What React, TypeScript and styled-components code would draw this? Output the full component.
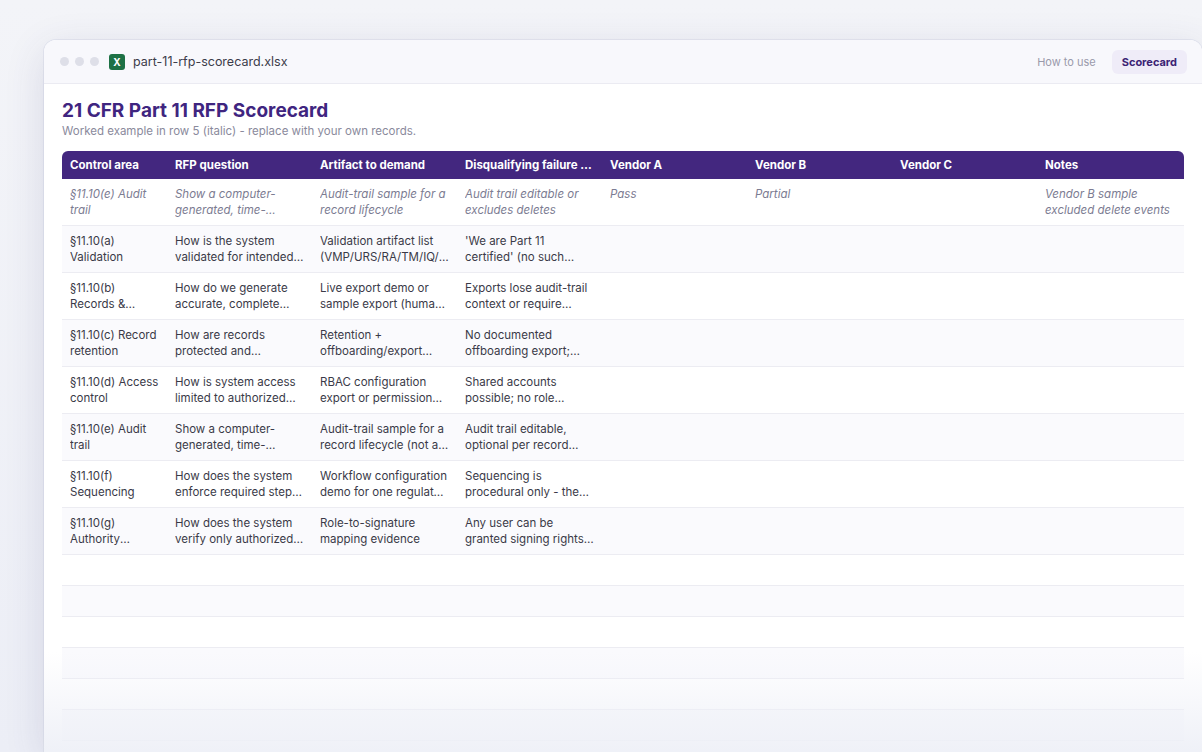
import React from 'react'
import styled, { createGlobalStyle } from 'styled-components'

const Global = createGlobalStyle`
  html, body { margin: 0; padding: 0; }
  body {
    width: 1202px; height: 752px; overflow: hidden;
    background: linear-gradient(180deg, #f3f4f8 0%, #eceef6 100%);
    font-family: Inter, "Noto Sans", sans-serif;
  }
`

const columns = [
  'Control area',
  'RFP question',
  'Artifact to demand',
  'Disqualifying failure mode',
  'Vendor A',
  'Vendor B',
  'Vendor C',
  'Notes',
]

const example = [
  '§11.10(e) Audit trail',
  'Show a computer-generated, time-stamped audit trail',
  'Audit-trail sample for a record lifecycle',
  'Audit trail editable or excludes deletes',
  'Pass',
  'Partial',
  '',
  'Vendor B sample excluded delete events',
]

const rows = [
  ['§11.10(a) Validation', 'How is the system validated for intended use?', 'Validation artifact list (VMP/URS/RA/TM/IQ/ OQ/PQ)', "'We are Part 11 certified' (no such certification)"],
  ['§11.10(b) Records & copies', 'How do we generate accurate, complete copies?', 'Live export demo or sample export (human readable)', 'Exports lose audit-trail context or require vendor'],
  ['§11.10(c) Record retention', 'How are records protected and retained?', 'Retention + offboarding/export policy', 'No documented offboarding export; data loss'],
  ['§11.10(d) Access control', 'How is system access limited to authorized users?', 'RBAC configuration export or permission matrix', 'Shared accounts possible; no role separation'],
  ['§11.10(e) Audit trail', 'Show a computer-generated, time-stamped audit trail', 'Audit-trail sample for a record lifecycle (not a mockup)', 'Audit trail editable, optional per record type'],
  ['§11.10(f) Sequencing', 'How does the system enforce required step order?', 'Workflow configuration demo for one regulated process', 'Sequencing is procedural only - the system allows skipping'],
  ['§11.10(g) Authority checks', 'How does the system verify only authorized signers?', 'Role-to-signature mapping evidence', 'Any user can be granted signing rights without review'],
]

export default function App() {
  return (
    <>
      <Global />
      <Stage>
        <Window>
          <TitleBar>
            <Dots>
              <Dot />
              <Dot />
              <Dot />
            </Dots>
            <XlsIcon>X</XlsIcon>
            <FileName>part-11-rfp-scorecard.xlsx</FileName>
            <Tabs>
              <Tab>How to use</Tab>
              <Tab active>Scorecard</Tab>
            </Tabs>
          </TitleBar>
          <Body>
            <Heading>21 CFR Part 11 RFP Scorecard</Heading>
            <Sub>Worked example in row 5 (italic) - replace with your own records.</Sub>
            <Table>
              <HeadRow>
                {columns.map((c) => (
                  <HeadCell key={c}>{c}</HeadCell>
                ))}
              </HeadRow>
              <Row>
                {example.map((t, i) => (
                  <Cell key={i} italic>
                    <Clamp>{t}</Clamp>
                  </Cell>
                ))}
              </Row>
              {rows.map((r, ri) => (
                <Row key={ri}>
                  {columns.map((_, i) => (
                    <Cell key={i}>
                      <Clamp>{r[i] || ''}</Clamp>
                    </Cell>
                  ))}
                </Row>
              ))}
              {[0, 1, 2, 3, 4, 5].map((i) => (
                <EmptyRow key={i} alt={i % 2 === 0} />
              ))}
            </Table>
          </Body>
          <Fade />
        </Window>
      </Stage>
    </>
  )
}

const Stage = styled.div`
  padding: 40px 0 0 44px;
`

const Window = styled.div`
  position: relative;
  width: 1158px;
  height: 712px;
  background: #fff;
  border-radius: 12px 12px 0 0;
  box-shadow: 0 10px 40px rgba(60, 60, 110, 0.14), 0 0 0 1px rgba(225, 227, 238, 0.8);
  overflow: hidden;
`

const TitleBar = styled.div`
  height: 44px;
  display: flex;
  align-items: center;
  padding: 0 16px;
  background: #f8f8fc;
  border-bottom: 1px solid #ebebf2;
  box-sizing: border-box;
`

const Dots = styled.div`
  display: flex;
  gap: 6px;
  margin-right: 10px;
`

const Dot = styled.span`
  width: 9px;
  height: 9px;
  border-radius: 50%;
  background: #dedfe8;
`

const XlsIcon = styled.span`
  width: 16px;
  height: 16px;
  border-radius: 3px;
  background: #1e7145;
  color: #fff;
  font-size: 10px;
  font-weight: 700;
  display: flex;
  align-items: center;
  justify-content: center;
  margin-right: 8px;
`

const FileName = styled.span`
  font-size: 12.5px;
  color: #3c3c4a;
`

const Tabs = styled.div`
  margin-left: auto;
  display: flex;
  gap: 6px;
  margin-right: -1px;
`

const Tab = styled.span<{ active?: boolean }>`
  font-size: 11px;
  padding: 5px 10px;
  border-radius: 6px;
  color: ${(p) => (p.active ? '#3b2374' : '#9a9aab')};
  font-weight: ${(p) => (p.active ? 700 : 400)};
  background: ${(p) => (p.active ? '#efecf8' : 'transparent')};
`

const Body = styled.div`
  padding: 15px 18px 0 18px;
`

const Heading = styled.h1`
  margin: 0;
  font-size: 19px;
  font-weight: 700;
  color: #3f2580;
  line-height: 24px;
`

const Sub = styled.div`
  font-size: 11.5px;
  color: #8a8a9c;
  margin-top: 1px;
  margin-bottom: 13px;
`

const Table = styled.div`
  width: 1122px;
`

const grid = `
  display: grid;
  grid-template-columns: 105px repeat(7, 145px);
`

const HeadRow = styled.div`
  ${grid};
  height: 28px;
  align-items: center;
  background: #43277f;
  border-radius: 6px 6px 0 0;
`

const HeadCell = styled.div`
  padding: 0 8px;
  font-size: 11.5px;
  font-weight: 700;
  color: #fff;
  white-space: nowrap;
  overflow: hidden;
  text-overflow: ellipsis;
`

const Row = styled.div`
  ${grid};
  height: 47px;
  border-bottom: 1px solid #ececf2;
  box-sizing: border-box;
  &:nth-child(odd) {
    background: #fafafd;
  }
`

const Cell = styled.div<{ italic?: boolean }>`
  padding: 7px 8px 0;
  font-size: 11.5px;
  line-height: 16px;
  color: ${(p) => (p.italic ? '#7c7c92' : '#3a3a48')};
  font-style: ${(p) => (p.italic ? 'italic' : 'normal')};
`

const Clamp = styled.div`
  display: -webkit-box;
  -webkit-line-clamp: 2;
  -webkit-box-orient: vertical;
  overflow: hidden;
`

const EmptyRow = styled.div<{ alt?: boolean }>`
  height: 30px;
  border-bottom: 1px solid #ececf2;
  background: ${(p) => (p.alt ? '#fff' : '#fafafd')};
`

const Fade = styled.div`
  position: absolute;
  left: 0;
  right: 0;
  bottom: 0;
  height: 100px;
  background: linear-gradient(180deg, rgba(238, 240, 247, 0) 0%, rgba(238, 240, 247, 0.95) 100%);
  pointer-events: none;
`
